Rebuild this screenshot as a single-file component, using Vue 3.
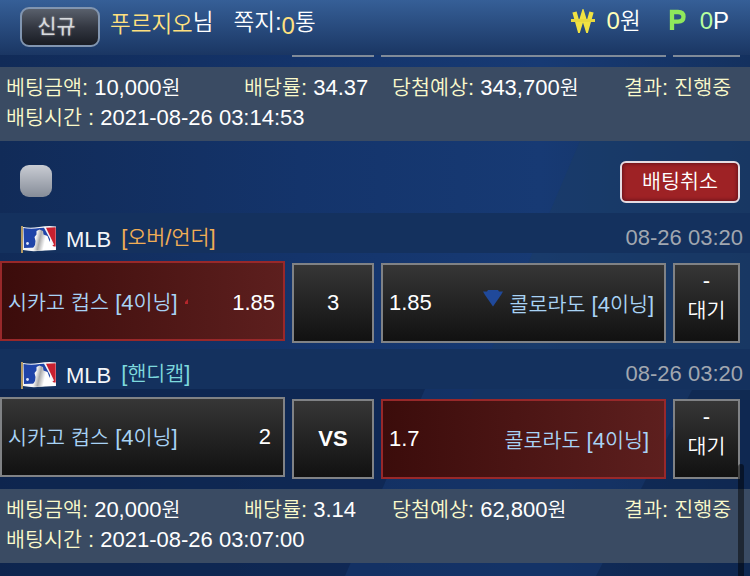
<template>
  <div class="page">
    <svg class="backdrop" viewBox="0 0 750 576" preserveAspectRatio="none">
      <path d="M580 141H750V400H470Z" fill="#1a3c66" fill-opacity=".6" />
      <path d="M0 389H750V576H0Z" fill="#112d58" fill-opacity=".45" />
      <path d="M692 390H750V576H596Z" fill="#0b2144" fill-opacity=".45" />
      <path d="M0 389H425L345 576H0Z" fill="#0b1f42" fill-opacity=".45" />
    </svg>

    <header class="top">
      <button class="new-btn"><Txt text="신규" /></button>
      <span class="user"><Txt class="gold name-low" text="푸르지오" /><Txt text="님" /></span>
      <span class="memo"><Txt text="쪽지:" /><Txt class="gold low" text="0" /><Txt text="통" /></span>
      <span class="wallet">
        <svg class="won" width="26" height="24" viewBox="0 0 26 24">
          <path d="M3.500 3 8 19 12 6 16 19 20.500 3" fill="none" stroke="#f0e242" stroke-width="4.400" />
          <path d="M0 11.500H24" stroke="#e8d83c" stroke-width="3" />
        </svg>
        <span class="money"><Txt class="pale" text="0" /><Txt text="원" /></span>
        <svg class="point" width="20" height="24" viewBox="0 0 20 24">
          <path d="M4 22V4H10Q15.5 4 15.5 8.8T10 13.6H5" fill="none" stroke="#8fe85c" stroke-width="4.3" />
        </svg>
        <span class="points"><Txt class="green" text="0" /><Txt text="P" /></span>
      </span>
    </header>

    <div class="prev-row"><i></i><i></i><i></i><i></i></div>

    <Summary v-bind="bets[0]" />

    <div class="actions">
      <span class="check"></span>
      <button class="cancel"><Txt text="배팅취소" /></button>
    </div>

    <section v-for="g in games" :key="g.type" class="game">
      <div class="league">
        <svg class="flag" width="36" height="28" viewBox="0 0 36 28">
          <defs>
            <linearGradient id="figure" x1="0" x2="1" y1="0" y2=".2">
              <stop offset="0" stop-color="#fff" />
              <stop offset=".25" stop-color="#f4f4f4" />
              <stop offset=".42" stop-color="#aaa" />
              <stop offset=".65" stop-color="#fff" />
            </linearGradient>
          </defs>
          <path d="M3 2Q10 3.500 19 2T36 1.500V25Q29 24 21 25.500T3 25Z" fill="#f4f5f8" />
          <path d="M3.500 3Q11 4.500 20 3L24 2.800 30 14V22L4 23Z" fill="#1f44a8" />
          <path d="M26 2.800 35.700 2.200V21.500H31L34 19.500Z" fill="#c8202f" />
          <path d="M11.500 25.500 15 20 15.500 16 14.500 12 16.500 9.500 16.500 6 19.500 4.500 23 6 23.500 9.500 27.500 11 29 15 31 19 35.500 23.500V25L21 25.700Z" fill="url(#figure)" />
          <circle cx="7.500" cy="18.500" r="1.400" fill="#dfe6fa" />
          <path d="M2 1V28" stroke="#b59a62" stroke-width="2" />
        </svg>
        <Txt class="name" text="MLB" />
        <Txt class="type" :class="g.kind" :text="g.type" />
        <Txt class="date" text="08-26 03:20" />
      </div>
      <div class="odds">
        <div class="cell home" :class="{ picked: g.pick === 'home' }">
          <Txt class="team" :text="g.home" />
          <svg v-if="g.arrows" class="up" width="4" height="6" viewBox="0 0 4 6">
            <path d="M3 0V5H0V3Z" fill="#b3262b" />
          </svg>
          <Txt class="rate" :text="g.homeRate" />
        </div>
        <div class="cell mid" :class="{ vs: g.mid === 'VS' }"><Txt :text="g.mid" /></div>
        <div class="cell away" :class="{ picked: g.pick === 'away' }">
          <Txt :text="g.awayRate" />
          <span class="away-team">
            <svg v-if="g.arrows" class="down" width="20" height="17" viewBox="0 0 20 17">
              <path d="M5 0H15L16 1.500H20L18 5 10 16.500 2 5 0 1.500H4Z" fill="#20499a" />
            </svg>
            <Txt class="team" :text="g.away" />
          </span>
        </div>
        <div class="cell state"><Txt class="dash" text="-" /><Txt text="대기" /></div>
      </div>
    </section>

    <Summary v-bind="bets[1]" />
    <div class="scroll-thumb"></div>
  </div>
</template>

<script setup>
import { h } from 'vue'

// Hangul runs are set slightly smaller than the digits around them
const Txt = (props) =>
  h('span', { class: 'txt' }, props.text.split(/([가-힣]+)/).filter(Boolean).map((s) =>
    /[가-힣]/.test(s) ? h('span', { class: 'ko' }, s) : s
  ))
Txt.props = ['text']

const pair = (label, value) => h('span', [
  h(Txt, { class: 'label', text: label + ' ' }),
  h(Txt, { text: value }),
])

const Summary = (props) => h('div', { class: 'summary' }, [
  h('div', { class: 'summary-cols' }, [
    pair('베팅금액:', props.amount),
    pair('배당률:', props.rate),
    pair('당첨예상:', props.win),
    h(Txt, { class: 'label', text: '결과: 진행중' }),
  ]),
  h('div', [pair('배팅시간 :', props.time)]),
])
Summary.props = ['amount', 'rate', 'win', 'time']

const bets = [
  { amount: '10,000원', rate: '34.37', win: '343,700원', time: '2021-08-26 03:14:53' },
  { amount: '20,000원', rate: '3.14', win: '62,800원', time: '2021-08-26 03:07:00' },
]

const games = [
  {
    type: '[오버/언더]', kind: 'over', pick: 'home', arrows: true,
    home: '시카고 컵스 [4이닝]', homeRate: '1.85', mid: '3',
    awayRate: '1.85', away: '콜로라도 [4이닝]',
  },
  {
    type: '[핸디캡]', kind: 'handi', pick: 'away', arrows: false,
    home: '시카고 컵스 [4이닝]', homeRate: '2', mid: 'VS',
    awayRate: '1.7', away: '콜로라도 [4이닝]',
  },
]
</script>

<style>
body { background: #12305f; }
.txt { white-space: pre; }
.ko { font-size: .938em; font-weight: 350; }
.summary {
  box-sizing: border-box; height: 74px; padding: 6px 0 0 6px;
  background: #3a4b63; line-height: 30px; color: #fff;
}
.summary-cols { display: grid; grid-template-columns: 238px 148px 232px auto; white-space: nowrap; }
.summary > div { height: 30px; }
.summary .label { color: #fafacb; }
</style>

<style scoped>
.page {
  position: relative; height: 576px; overflow: hidden;
  font-family: "Liberation Sans", "Noto Sans CJK KR", sans-serif;
  font-size: 22px; color: #fff;
  background: linear-gradient(90deg, #112b58 0, #14346b 40%, #173a74 72%, #14315f 100%);
}
.page > * { position: relative; }
.page > .backdrop { position: absolute; inset: 0; width: 750px; height: 576px; }
button { font-family: inherit; color: #fff; padding: 0; }

.top {
  display: flex; height: 55px; font-size: 24px; line-height: 30px;
  background: linear-gradient(#365f97, #1a3663);
  white-space: nowrap;
}
.new-btn {
  box-sizing: border-box; width: 80px; height: 40px; margin: 7px 0 0 20px; padding: 0 7px 4px 0;
  border: 2px solid #8195b0; border-radius: 9px; font-size: 22px;
  background: linear-gradient(#59606c, #343842 50%, #191c24);
  color: #d8dade; text-shadow: 0 0 2px #aaa;
}
.new-btn :deep(.ko) { font-weight: 400; }
.user { margin: 7px 0 0 10px; }
.memo { margin: 7px 0 0 20px; }
.gold { color: #ffe07f; }
.name-low { position: relative; top: 2px; }
.low { position: relative; top: 4px; }
.wallet { display: flex; margin: 6px 21px 0 auto; }
.won { margin: 3px 10px 0 0; filter: blur(.5px); }
.point { margin: 2px 12px 0 27px; filter: blur(.5px); }
.pale { color: #ffffb8; }
.green { color: #b6ff9f; }

.prev-row, .odds { display: grid; grid-template-columns: 285px 82px 285px 67px; column-gap: 7px; }
.prev-row { height: 12px; }
.prev-row i { height: 2px; background: #808b99; }
.prev-row i:first-child { background: none; }

.actions { display: flex; height: 72px; justify-content: space-between; padding: 0 10px 0 20px; }
.check { width: 32px; height: 32px; margin-top: 24px; border-radius: 9px; background: linear-gradient(#c9ccd3, #858c98); }
.cancel {
  box-sizing: border-box; width: 120px; height: 42px; margin-top: 20px; font-size: 22px;
  border: 2px solid #e5dce2; border-radius: 6px; background: #9e2225;
  box-shadow: inset 0 0 4px #4d0b15; line-height: 36px;
}

.game { height: 136px; }
.game:nth-of-type(2) { height: 140px; }
.league { display: flex; height: 40px; background: #14315e; white-space: nowrap; padding-right: 7px; }
.flag { margin: 12px 0 0 20px; }
.name { margin: 14px 0 0 10px; line-height: 25px; color: #f3f5f8; }
.type { margin: 10px 0 0 10px; line-height: 30px; }
.over { color: #f0ad55; }
.handi { color: #7dd9dd; }
.date { margin: 12px 0 0 auto; line-height: 25px; color: #a1a7b0; }
.odds { padding-top: 10px; }
.cell {
  box-sizing: border-box; height: 80px; display: flex; align-items: center;
  border: 2px solid #808285; background: linear-gradient(#363636, #111);
  white-space: nowrap;
}
.picked { border-color: #98282a; background: linear-gradient(90deg, #3b0c0b, #5d1f1e); }
.home { margin-top: -2px; padding: 0 8px 0 6px; }
.game:nth-of-type(2) .home { padding: 0 12px 3px 6px; }
.team { color: #a8d3f5; }
.up { margin: 2px 0 0 7px; }
.rate { margin-left: auto; padding-top: 3px; }
.mid { justify-content: center; }
.vs { font-weight: bold; }
.away { justify-content: space-between; padding: 0 10px 0 6px; }
.game:nth-of-type(2) .away { padding-right: 15px; }
.away-team { display: flex; }
.down { margin: 2px 7px 0 0; }
.state { flex-direction: column; line-height: 30px; padding-top: 1px; }
.dash { height: 30px; }

.page > .scroll-thumb {
  position: absolute; left: 738px; top: 464px; width: 6px; height: 130px;
  border-radius: 3px; background: rgba(0, 0, 0, .48);
}
</style>
